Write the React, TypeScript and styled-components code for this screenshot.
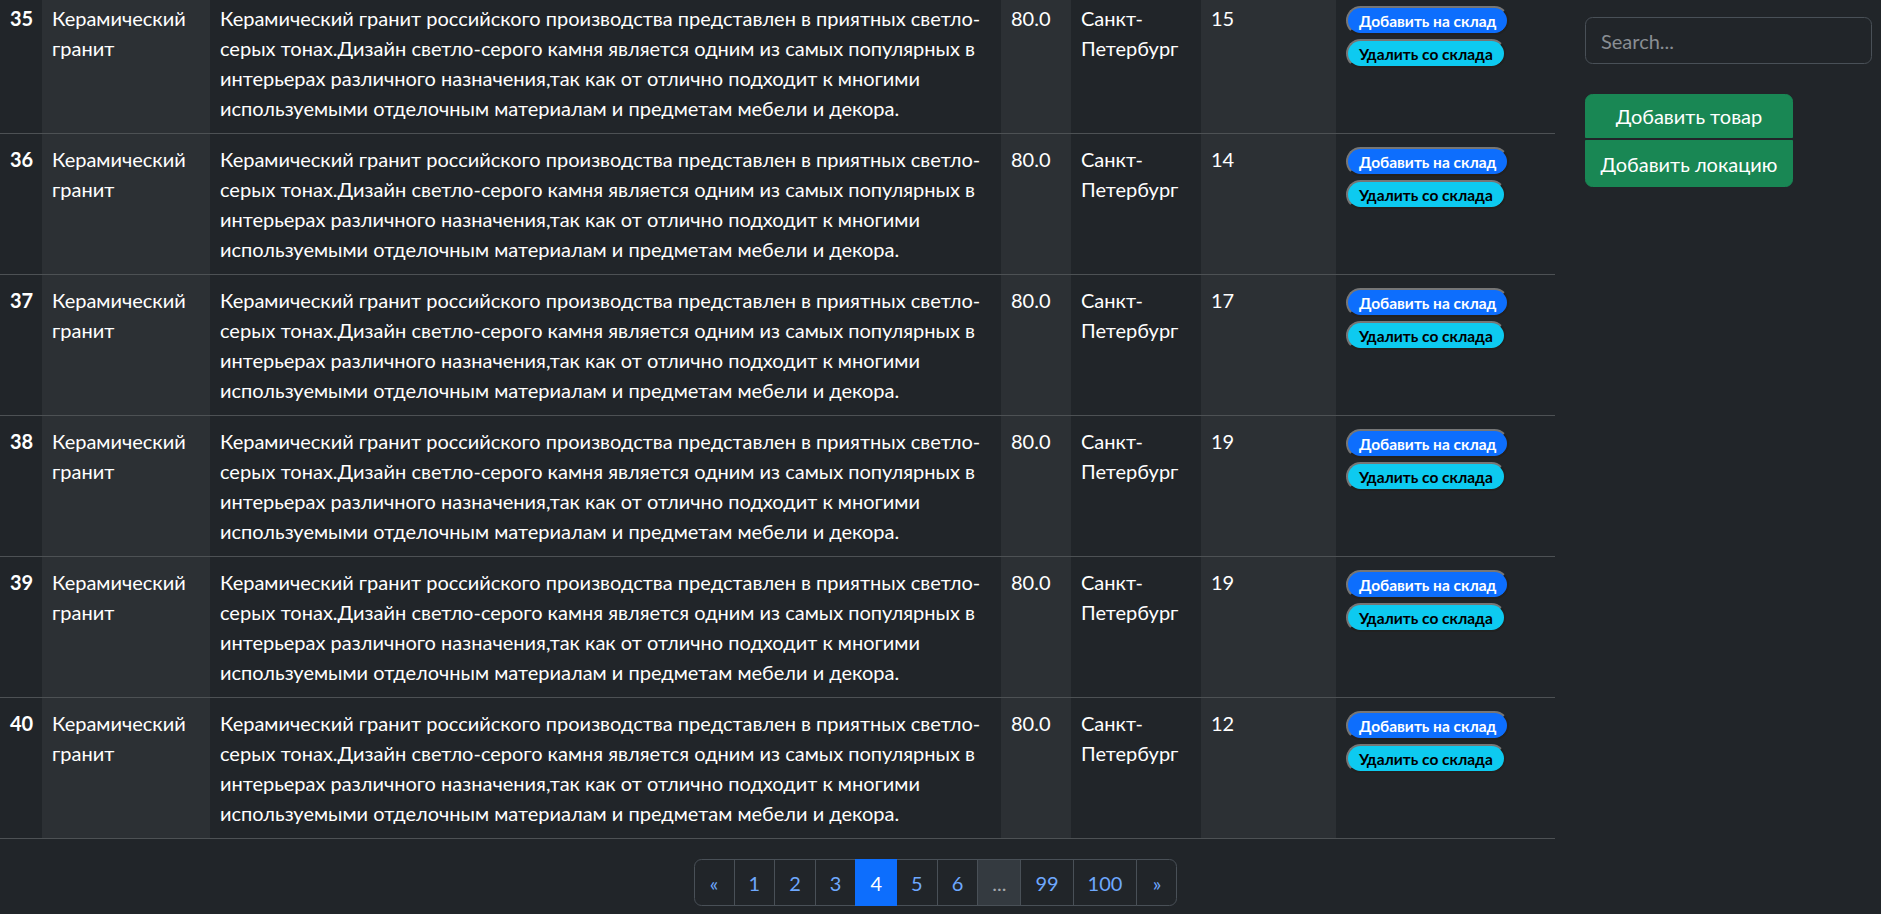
import React from "react";
import styled, { createGlobalStyle } from "styled-components";

const GlobalStyle = createGlobalStyle`
  html, body {
    margin: 0;
    padding: 0;
    background: #212529;
    color: #dee2e6;
    font-family: Lato, "Liberation Sans", sans-serif;
    font-size: 20px;
    line-height: 1.5;
    overflow: hidden;
  }
  * { box-sizing: border-box; }
`;

const Page = styled.div`
  width: 1881px;
`;

const Layout = styled.div`
  display: flex;
  align-items: flex-start;
`;

const Main = styled.main`
  width: 1555px;
  flex: none;
  margin-top: -7px;
`;

const Table = styled.table`
  width: 1555px;
  border-collapse: collapse;
  table-layout: fixed;
  color: #fff;
`;

const Cell = styled.td<{ $striped?: boolean; $bold?: boolean }>`
  padding: 10px;
  vertical-align: top;
  text-align: left;
  border-bottom: 1px solid #4d5154;
  background: ${(p) => (p.$striped ? "#2c3034" : "#212529")};
  font-weight: ${(p) => (p.$bold ? 700 : 400)};
  line-height: 30px;
`;

const Actions = styled.div`
  display: flex;
  flex-direction: column;
  align-items: flex-start;
  gap: 4px;
  padding-top: 3px;
`;

const PillButton = styled.button<{ $variant: "add" | "remove" }>`
  font-family: Lato, "Liberation Sans", sans-serif;
  font-weight: 700;
  font-size: 15.5px;
  line-height: 24px;
  height: 29px;
  padding: 0 11px;
  border-radius: 15px;
  border: 2px outset #767676;
  background: ${(p) => (p.$variant === "add" ? "#0d6efd" : "#0dcaf0")};
  color: ${(p) => (p.$variant === "add" ? "#fff" : "#000")};
  white-space: nowrap;
  cursor: pointer;
`;

const Sidebar = styled.aside`
  flex: none;
  width: 326px;
  padding: 17px 0 0 30px;
  display: flex;
  flex-direction: column;
  gap: 30px;
`;

const SearchInput = styled.input`
  width: 287px;
  height: 47px;
  padding: 7.5px 15px;
  font-family: Lato, "Liberation Sans", sans-serif;
  font-size: 20px;
  line-height: 30px;
  color: #dee2e6;
  background: #212529;
  border: 1px solid #495057;
  border-radius: 7.5px;
  outline: none;
  &::placeholder {
    color: #898e93;
  }
`;

const ButtonGroup = styled.div`
  display: flex;
  flex-direction: column;
  gap: 2px;
  width: 208px;
`;

const GreenButton = styled.button<{ $pos: "top" | "bottom" }>`
  font-family: Lato, "Liberation Sans", sans-serif;
  font-size: 20px;
  line-height: 30px;
  color: #fff;
  background: #198754;
  border: 1px solid #198754;
  padding: ${(p) => (p.$pos === "top" ? "6px 10px" : "7.5px 10px")};
  border-radius: ${(p) => (p.$pos === "top" ? "7.5px 7.5px 0 0" : "0 0 7.5px 7.5px")};
  text-align: center;
  white-space: nowrap;
  cursor: pointer;
`;

const PagerRow = styled.nav`
  display: flex;
  justify-content: center;
  padding: 20px 10px 0 0;
`;

const Pager = styled.ul`
  display: flex;
  list-style: none;
  margin: 0;
  padding: 0;
`;

const PageItem = styled.li<{ $active?: boolean; $disabled?: boolean }>`
  padding: 7.5px 14px;
  line-height: 30px;
  font-size: 20px;
  min-width: 41px;
  text-align: center;
  border: 1px solid ${(p) => (p.$active ? "#0d6efd" : "#495057")};
  margin-left: -1px;
  background: ${(p) => (p.$active ? "#0d6efd" : p.$disabled ? "#343a40" : "#212529")};
  color: ${(p) => (p.$active ? "#fff" : p.$disabled ? "#a4a8ac" : "#6ea8fe")};
  position: relative;
  z-index: ${(p) => (p.$active ? 1 : 0)};
  &:first-child {
    margin-left: 0;
    border-radius: 7.5px 0 0 7.5px;
  }
  &:last-child {
    border-radius: 0 7.5px 7.5px 0;
  }
`;

const DESCRIPTION =
  "Керамический гранит российского производства представлен в приятных светло-серых тонах.Дизайн светло-серого камня является одним из самых популярных в интерьерах различного назначения,так как от отлично подходит к многими используемыми отделочным материалам и предметам мебели и декора.";

const rows = [
  { id: 35, qty: 15 },
  { id: 36, qty: 14 },
  { id: 37, qty: 17 },
  { id: 38, qty: 19 },
  { id: 39, qty: 19 },
  { id: 40, qty: 12 },
];

const colWidths = [42, 168, 791, 70, 130, 135, 219];

const pages = [
  { label: "«" },
  { label: "1" },
  { label: "2" },
  { label: "3" },
  { label: "4", active: true },
  { label: "5" },
  { label: "6" },
  { label: "...", disabled: true },
  { label: "99" },
  { label: "100" },
  { label: "»" },
];

export default function App() {
  return (
    <Page>
      <GlobalStyle />
      <Layout>
        <Main>
          <Table>
            <colgroup>
              {colWidths.map((w, i) => (
                <col key={i} style={{ width: w }} />
              ))}
            </colgroup>
            <tbody>
              {rows.map((r) => (
                <tr key={r.id}>
                  <Cell as="th" scope="row" $bold>
                    {r.id}
                  </Cell>
                  <Cell $striped>Керамический гранит</Cell>
                  <Cell>{DESCRIPTION}</Cell>
                  <Cell $striped>80.0</Cell>
                  <Cell>Санкт-Петербург</Cell>
                  <Cell $striped>{r.qty}</Cell>
                  <Cell>
                    <Actions>
                      <PillButton $variant="add">Добавить на склад</PillButton>
                      <PillButton $variant="remove">Удалить со склада</PillButton>
                    </Actions>
                  </Cell>
                </tr>
              ))}
            </tbody>
          </Table>
        </Main>
        <Sidebar>
          <SearchInput placeholder="Search..." />
          <ButtonGroup>
            <GreenButton $pos="top">Добавить товар</GreenButton>
            <GreenButton $pos="bottom">Добавить локацию</GreenButton>
          </ButtonGroup>
        </Sidebar>
      </Layout>
      <PagerRow>
        <Pager>
          {pages.map((p) => (
            <PageItem key={p.label} $active={p.active} $disabled={p.disabled}>
              {p.label}
            </PageItem>
          ))}
        </Pager>
      </PagerRow>
    </Page>
  );
}
